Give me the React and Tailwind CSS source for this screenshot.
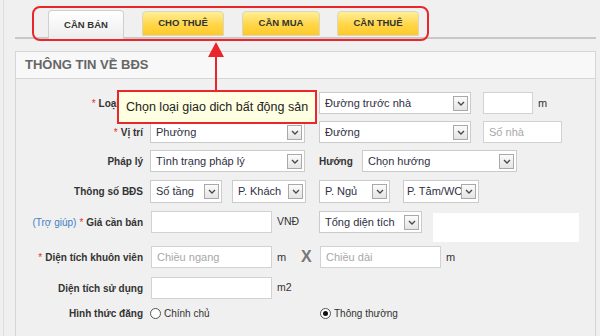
import React from 'react';

const font = { fontFamily: '"Liberation Sans", Arial, sans-serif' };

function Chevron() {
  return (
    <svg width="8" height="5" viewBox="0 0 8 5" aria-hidden="true">
      <path d="M1 1 L4 4 L7 1" fill="none" stroke="#4a4a4a" strokeWidth="1.4" />
    </svg>
  );
}

function Select({ text, className = '' }) {
  return (
    <div className={`flex items-center h-[22px] bg-white border border-[#cbcbcb] pl-[5px] pr-[2px] shrink-0 ${className}`}>
      <span className="flex-1 whitespace-nowrap overflow-hidden text-[11px] text-[#2f2f3f] leading-none">{text}</span>
      <span className="w-[15px] h-[15px] border border-[#a9a9a9] bg-gradient-to-b from-[#fbfbfb] to-[#e4e4e4] flex items-center justify-center shrink-0">
        <Chevron />
      </span>
    </div>
  );
}

function Input({ placeholder, className = '' }) {
  return (
    <div className={`h-[22px] bg-white border border-[#d2d2d2] pl-[5px] flex items-center text-[11px] text-[#a8a8a8] shrink-0 ${className}`}>
      {placeholder}
    </div>
  );
}

function Label({ children, star }) {
  return (
    <div className="w-[127px] shrink-0 text-right text-[10px] font-bold text-[#333] whitespace-nowrap">
      {star && <span className="text-[#e0332f] font-normal mr-[3px]">*</span>}
      {children}
    </div>
  );
}

function Radio({ checked, label }) {
  return (
    <div className="flex items-center gap-[3px] text-[10px] text-[#333]">
      <span className="w-[11px] h-[11px] rounded-full border border-[#555] bg-white flex items-center justify-center">
        {checked && <span className="w-[5px] h-[5px] rounded-full bg-[#111]" />}
      </span>
      {label}
    </div>
  );
}

export default function App() {
  return (
    <div className="relative w-[600px] h-[336px] overflow-hidden bg-[#f0f0f0]" style={font}>
      <div className="ml-[3px] h-full border-l border-[#dedede] pl-[11px]">
        {/* tabs */}
        <div className="w-[581px] h-[39px] border-b-2 border-[#c8c8c8] flex items-end pl-[33px]">
          <div className="relative z-10 w-[76px] h-[29px] -mb-[2px] border border-b-0 border-[#cfcfcf] rounded-t-[4px] bg-gradient-to-b from-white to-[#ededed] flex items-center justify-center text-[9.5px] font-bold text-[#333]">
            CẦN BÁN
          </div>
          <div className="ml-[18px] w-[82px] h-[25px] mb-[1px] border border-[#dcd6c0] rounded-t-[4px] bg-gradient-to-b from-[#ffef96] via-[#ffd84c] to-[#ffc925] flex items-center justify-center text-[9.5px] font-bold text-[#333]">
            CHO THUÊ
          </div>
          <div className="ml-[18px] w-[78px] h-[25px] mb-[1px] border border-[#dcd6c0] rounded-t-[4px] bg-gradient-to-b from-[#ffef96] via-[#ffd84c] to-[#ffc925] flex items-center justify-center text-[9.5px] font-bold text-[#333]">
            CẦN MUA
          </div>
          <div className="ml-[17px] w-[82px] h-[25px] mb-[1px] border border-[#dcd6c0] rounded-t-[4px] bg-gradient-to-b from-[#ffef96] via-[#ffd84c] to-[#ffc925] flex items-center justify-center text-[9.5px] font-bold text-[#333]">
            CẦN THUÊ
          </div>
        </div>

        {/* panel */}
        <div className="mt-[12px] w-[581px] h-[300px] border border-[#d6d6d6]">
          <div className="h-[27px] bg-[#f8f8f8] border-b border-[#d6d6d6] flex items-center pl-[9px] text-[13px] font-bold text-[#666]">
            THÔNG TIN VỀ BĐS
          </div>

          <div className="flex flex-col">
            <div className="mt-[13px] h-[22px] flex items-center">
              <Label star>Loại BĐS</Label>
              <Select text="" className="ml-[7px] w-[155px]" />
              <Select text="Đường trước nhà" className="ml-[14px] w-[152px]" />
              <Input className="ml-[12px] w-[50px]" />
              <span className="ml-[5px] text-[11px] text-[#333]">m</span>
            </div>

            <div className="mt-[7px] h-[22px] flex items-center">
              <Label star>Vị trí</Label>
              <Select text="Phường" className="ml-[7px] w-[155px]" />
              <Select text="Đường" className="ml-[14px] w-[152px]" />
              <Input placeholder="Số nhà" className="ml-[12px] w-[79px]" />
            </div>

            <div className="mt-[7px] h-[22px] flex items-center">
              <Label>Pháp lý</Label>
              <Select text="Tình trạng pháp lý" className="ml-[7px] w-[155px]" />
              <span className="ml-[14px] text-[10px] font-bold text-[#333] w-[29px]">Hướng</span>
              <Select text="Chọn hướng" className="ml-[14px] w-[155px]" />
            </div>

            <div className="mt-[8px] h-[23px] flex items-center">
              <Label>Thông số BĐS</Label>
              <Select text="Số tầng" className="ml-[7px] w-[72px] h-[23px]" />
              <Select text="P. Khách" className="ml-[10px] w-[74px] h-[23px]" />
              <Select text="P. Ngủ" className="ml-[13px] w-[71px] h-[23px]" />
              <Select text="P. Tắm/WC" className="ml-[13px] w-[76px] h-[23px] !pl-[3px]" />
            </div>

            <div className="mt-[8px] flex items-start">
              <div className="h-[22px] flex items-center">
                <div className="w-[127px] shrink-0 text-right text-[10px] whitespace-nowrap">
                  <span className="text-[#3f7fc4]">(Trợ giúp)</span>
                  <span className="text-[#e0332f] ml-[3px] mr-[3px]">*</span>
                  <span className="font-bold text-[#333]">Giá cần bán</span>
                </div>
                <Input className="ml-[8px] w-[121px]" />
                <span className="ml-[5px] text-[10.5px] text-[#333] w-[42px]">VNĐ</span>
                <Select text="Tổng diện tích" className="w-[103px]" />
              </div>
              <div className="ml-[11px] mt-[2px] w-[146px] h-[29px] bg-white" />
            </div>

            <div className="mt-[4px] h-[22px] flex items-center">
              <Label star>Diện tích khuôn viên</Label>
              <Input placeholder="Chiều ngang" className="ml-[8px] w-[121px]" />
              <span className="ml-[5px] text-[11px] text-[#333] w-[24px]">m</span>
              <span className="text-[16px] font-bold text-[#777] w-[19px]">X</span>
              <Input placeholder="Chiều dài" className="w-[121px]" />
              <span className="ml-[5px] text-[11px] text-[#333]">m</span>
            </div>

            <div className="mt-[9px] h-[22px] flex items-center">
              <Label>Diện tích sử dụng</Label>
              <Input className="ml-[8px] w-[121px]" />
              <span className="ml-[5px] text-[10.5px] text-[#333]">m2</span>
            </div>

            <div className="mt-[6px] h-[16px] flex items-center">
              <Label>Hình thức đăng</Label>
              <div className="ml-[7px] w-[170px]">
                <Radio label="Chính chủ" />
              </div>
              <Radio checked label="Thông thường" />
            </div>
          </div>
        </div>
      </div>

      {/* annotation: red frame around tabs */}
      <div className="absolute left-[32px] top-[6px] w-[397px] h-[35px] border-2 border-[#e8262b] rounded-[8px]" />

      {/* annotation: arrow */}
      <svg className="absolute left-[206px] top-[41px]" width="20" height="52" viewBox="0 0 20 52" aria-hidden="true">
        <polygon points="10,1 18,16 2,16" fill="#e8262b" />
        <rect x="9" y="15" width="2" height="36" fill="#e8262b" />
      </svg>

      {/* annotation: tooltip */}
      <div className="absolute left-[117px] top-[90px] w-[200px] h-[34px] bg-[#ffffe1] border-2 border-[#e8262b] flex items-center pl-[7px] text-[12.5px] text-[#222] whitespace-nowrap">
        Chọn loại giao dich bất động sản
      </div>
    </div>
  );
}
